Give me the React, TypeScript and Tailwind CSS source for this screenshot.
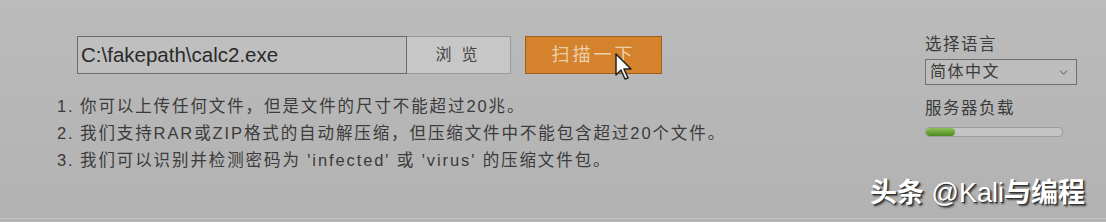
import { ChevronDown } from 'lucide-react'

const cjk = "font-['Liberation_Sans','Noto_Sans_CJK_SC',sans-serif]"

const tips = [
  '你可以上传任何文件，但是文件的尺寸不能超过20兆。',
  '我们支持RAR或ZIP格式的自动解压缩，但压缩文件中不能包含超过20个文件。',
  "我们可以识别并检测密码为 'infected' 或 'virus' 的压缩文件包。",
]

function Cursor() {
  return (
    <svg width="22" height="30" viewBox="0 0 22 30" className="absolute left-[614px] top-[52px]">
      <path
        d="M2 2 L2 23 L7 18 L11 27 L14 26 L10 17 L17 17 Z"
        fill="#fafafa"
        stroke="#222"
        strokeWidth="1.5"
        strokeLinejoin="round"
      />
    </svg>
  )
}

export default function App() {
  return (
    <div
      className={`relative w-[1106px] h-[222px] overflow-hidden bg-gradient-to-b from-[#bbbbbb] to-[#b2b2b2] text-[#3b3b3b] ${cjk}`}
    >
      <div className="flex">
        <div className="w-[868px] pl-[57px] pt-[36px]">
          <div className="flex items-stretch ml-[20px] h-[38px]">
            <div className="w-[330px] border border-[#6a6a6a] bg-[#bfbfbf] pl-[3px] flex items-center text-[20.5px] text-[#2a2a2a]">
              C:\fakepath\calc2.exe
            </div>
            <div className="w-[104px] border-y border-r border-[#9a9a9a] bg-[#c7c7c7] flex items-center justify-center pl-[6px] text-[16px] tracking-[10px] text-[#444]">
              浏览
            </div>
            <div className="ml-[14px] w-[137px] border border-[#a05e1e] bg-[#d4822c] flex items-center justify-center text-[18px] tracking-[3px] text-[#ecd0ae]">
              扫描一下
            </div>
          </div>
          <ol className="mt-[23px] flex flex-col gap-[8px] text-[16.5px] leading-[19px] tracking-[1.9px]">
            {tips.map((t, i) => (
              <li key={i} className="flex">
                <span className="w-[23px]">{i + 1}.</span>
                <span>{t}</span>
              </li>
            ))}
          </ol>
        </div>
        <div className="pl-[57px] pt-[34px] flex flex-col">
          <div className="text-[16.5px] leading-[20px] tracking-[1.5px]">选择语言</div>
          <div className="mt-[5px] w-[152px] h-[26px] border border-[#707070] bg-[#bdbdbd] flex items-center justify-between pl-[4px] pr-[6px] text-[16px] tracking-[1.5px]">
            <span>简体中文</span>
            <ChevronDown size={13} strokeWidth={1.5} />
          </div>
          <div className="mt-[13px] text-[16.5px] leading-[20px] tracking-[1.5px]">服务器负载</div>
          <div className="mt-[9px] w-[138px] h-[10px] rounded-[4px] border border-[#9c9c9c] bg-[#c4c4c4] overflow-hidden">
            <div className="h-full w-[29px] rounded-[4px] bg-gradient-to-b from-[#8ec25a] to-[#4c8a1c]" />
          </div>
        </div>
      </div>
      <Cursor />
      <div className="absolute left-[870px] top-[176px] text-[27px] leading-[34px] font-bold text-white [text-shadow:1px_1px_0_#333,2px_2px_2px_#444]">
        头条 <span className="font-normal">@Kali</span>与编程
      </div>
      <div className="absolute bottom-[3px] left-0 right-0 h-px bg-[#c4c4c4]" />
    </div>
  )
}
